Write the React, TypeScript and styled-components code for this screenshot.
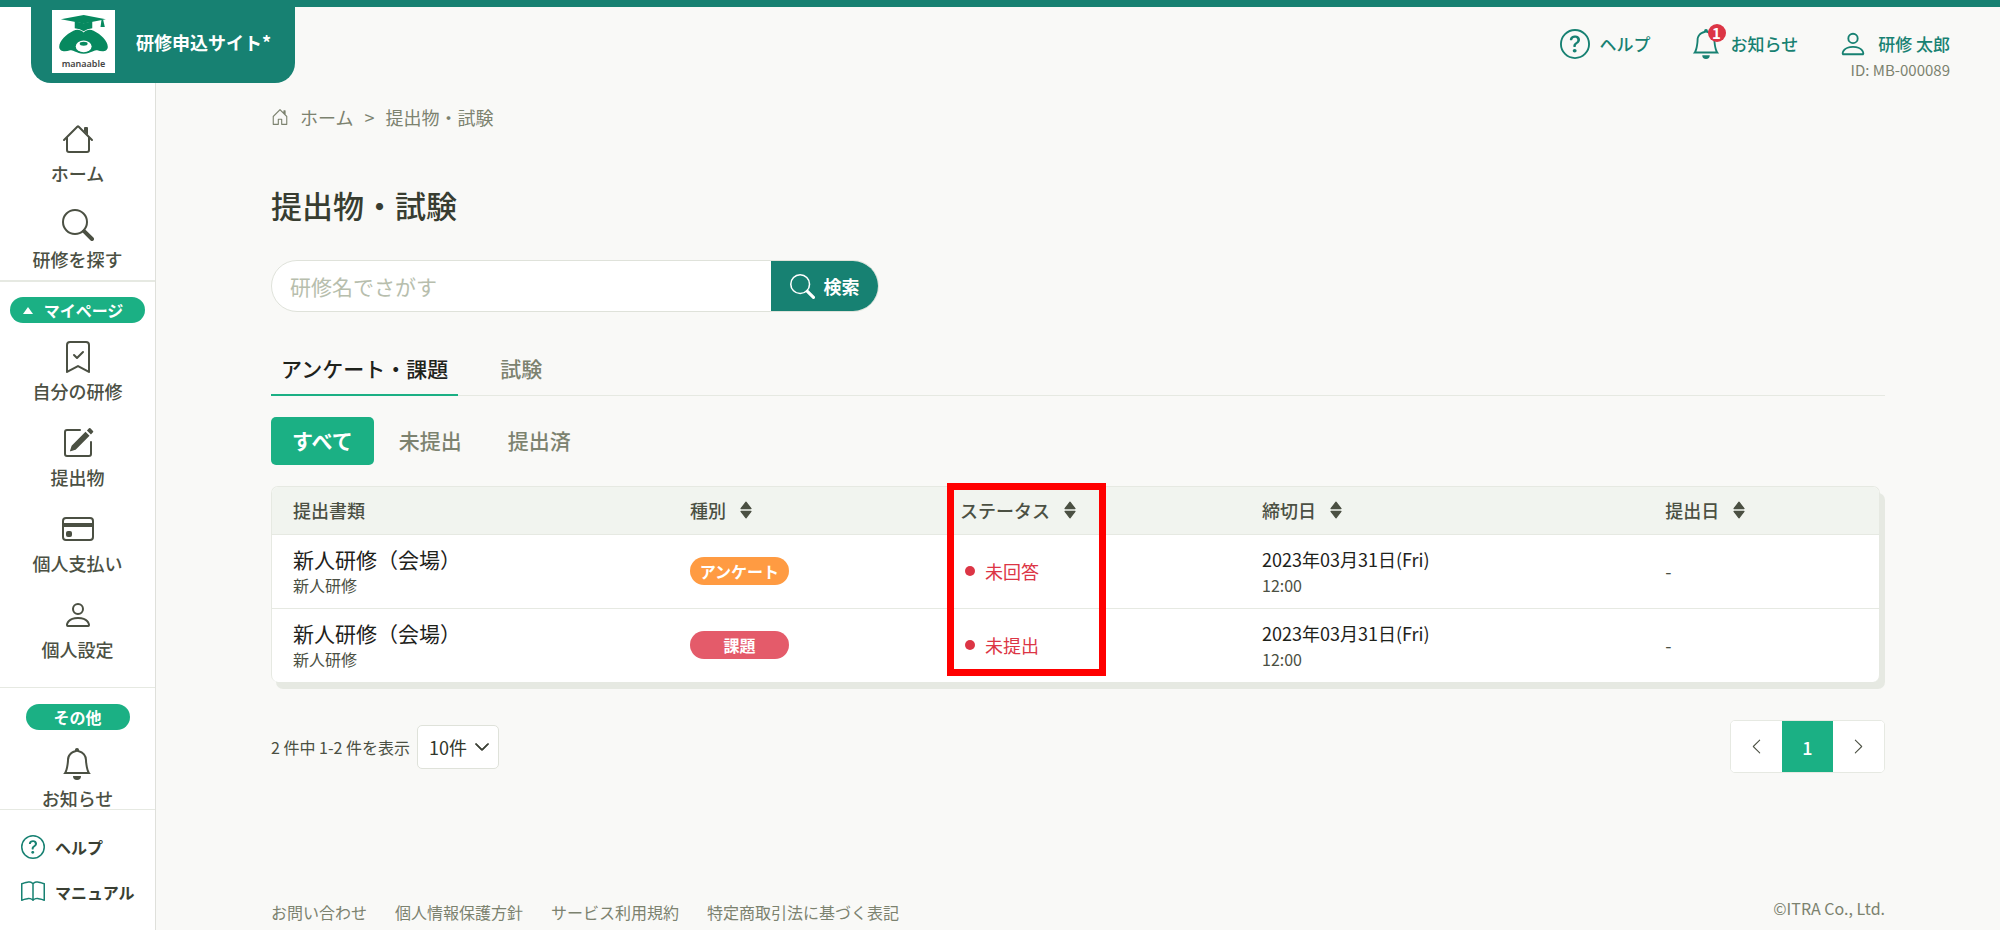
import React from "react";
import styled, { createGlobalStyle, css } from "styled-components";
import {
  BsBook,
  BsBookmarkCheck,
  BsChevronDown,
  BsChevronLeft,
  BsChevronRight,
  BsCreditCard,
  BsHouseDoor,
  BsPencilSquare,
  BsQuestionCircle,
} from "react-icons/bs";

const color = {
  deep: "#178172",
  accent: "#1bb084",
  text: "#4b5043",
  muted: "#7c826f",
  ink: "#1e221b",
  line: "#e6e9e2",
  page: "#f9f9f7",
  danger: "#dc3545",
};

const GlobalStyle = createGlobalStyle`
  *, *::before, *::after { box-sizing: border-box; }
  body {
    margin: 0;
    background: ${color.page};
    color: ${color.text};
    font-family: "Noto Sans CJK JP", "Noto Sans", sans-serif;
    font-size: 18px;
    line-height: 26px;
  }
  a { color: inherit; text-decoration: none; }
  button, input, select { font: inherit; color: inherit; }
  button { cursor: pointer; }
  h1, p, ul { margin: 0; padding: 0; }
  ul { list-style: none; }
  svg { display: block; flex: none; }
`;

/* ---------- icons ---------- */

type IconProps = { size: number };

const Glyph = ({ size, children }: IconProps & { children: React.ReactNode }) => (
  <svg width={size} height={size} viewBox="0 0 16 16" fill="currentColor" fillRule="evenodd" aria-hidden="true">
    {children}
  </svg>
);

const HouseIcon = ({ size }: IconProps) => (
  <Glyph size={size}>
    <path d="M2 13.5V7h1v6.5a.5.5 0 0 0 .5.5h9a.5.5 0 0 0 .5-.5V7h1v6.5a1.5 1.5 0 0 1-1.5 1.5h-9A1.5 1.5 0 0 1 2 13.5zm11-11V6l-2-2V2.5a.5.5 0 0 1 .5-.5h1a.5.5 0 0 1 .5.5z" />
    <path d="M7.293 1.5a1 1 0 0 1 1.414 0l6.647 6.646a.5.5 0 0 1-.708.708L8 2.207 1.354 8.854a.5.5 0 1 1-.708-.708L7.293 1.5z" />
  </Glyph>
);

const SearchIcon = ({ size }: IconProps) => (
  <Glyph size={size}>
    <path d="M10.442 10.442a1 1 0 0 1 1.415 0l3.85 3.85a1 1 0 0 1-1.414 1.415l-3.85-3.85a1 1 0 0 1 0-1.415z" />
    <path d="M6.5 12a5.5 5.5 0 1 0 0-11 5.5 5.5 0 0 0 0 11zM13 6.5a6.5 6.5 0 1 1-13 0 6.5 6.5 0 0 1 13 0z" />
  </Glyph>
);

const PersonIcon = ({ size }: IconProps) => (
  <Glyph size={size}>
    <path d="M10 5a2 2 0 1 1-4 0 2 2 0 0 1 4 0zM8 8a3 3 0 1 0 0-6 3 3 0 0 0 0 6zm6 5c0 1-1 1-1 1H3s-1 0-1-1 1-4 6-4 6 3 6 4zm-1-.004c-.001-.246-.154-.986-.832-1.664C11.516 10.68 10.289 10 8 10c-2.29 0-3.516.68-4.168 1.332-.678.678-.83 1.418-.832 1.664h10z" />
  </Glyph>
);

const BellIcon = ({ size }: IconProps) => (
  <Glyph size={size}>
    <path d="M8 16a2 2 0 0 0 2-2H6a2 2 0 0 0 2 2z" />
    <path d="M8 1.918l-.797.161A4.002 4.002 0 0 0 4 6c0 .628-.134 2.197-.459 3.742-.16.767-.376 1.566-.663 2.258h10.244c-.287-.692-.502-1.49-.663-2.258C12.134 8.197 12 6.628 12 6a4.002 4.002 0 0 0-3.203-3.92L8 1.917zM14.22 12c.223.447.481.801.78 1H1c.299-.199.557-.553.78-1C2.68 10.2 3 6.88 3 6c0-2.42 1.72-4.44 4.005-4.901a1 1 0 1 1 1.99 0A5.002 5.002 0 0 1 13 6c0 .88.32 4.2 1.22 6z" />
  </Glyph>
);

const SortIcon = () => (
  <svg width="12" height="18" viewBox="0 0 12 18" fill="currentColor" aria-hidden="true">
    <path d="M6 1.200 11 7.600H1zM6 16.800 1 10.400h10z" stroke="currentColor" strokeWidth="1.200" strokeLinejoin="round" />
  </svg>
);

const BearMark = () => (
  <svg width="50" height="39" viewBox="33 26 150 118" aria-hidden="true">
    <g fill="#07895f">
      <path d="M38 39 107 26l67 13-67 13z" />
      <path d="M80 45l27 6 26-6v21q-16 1-26 9-10-8-27-9z" />
      <path d="M161 40h5l5 22h-13z" />
      <path d="M107 79C98 69 85 69 76 74 55 84 33 105 33 122c0 15 17 16 33 11 10-3 14 8 41 10 27-2 31-13 41-10 16 5 32 4 32-11 0-17-22-38-43-48-9-5-21-5-30 5z" />
    </g>
    <ellipse cx="107" cy="121" rx="24" ry="18" fill="#fff" />
    <ellipse cx="107" cy="113" rx="12" ry="6" fill="#07895f" />
  </svg>
);

/* ---------- header ---------- */

const Header = styled.header`
  position: relative;
  z-index: 2;
  display: flex;
  justify-content: space-between;
  align-items: flex-start;
  height: 84px;
  padding: 0 50px 0 31px;
  border-top: 7px solid ${color.deep};
`;

const Brand = styled.a`
  display: flex;
  align-items: center;
  gap: 21px;
  height: 76px;
  padding: 3px 24px 10px 21px;
  border-radius: 0 0 20px 20px;
  background: ${color.deep};
  color: #fff;
  font-weight: 700;
`;

const LogoBox = styled.span`
  display: flex;
  flex-direction: column;
  align-items: center;
  gap: 3px;
  width: 63px;
  height: 63px;
  padding-top: 5px;
  background: #fff;
  color: #444;
  font: 600 9px/14px "Noto Sans", sans-serif;
`;

const HeaderNav = styled.nav`
  display: flex;
  gap: 40px;
  padding-top: 22px;
  color: ${color.deep};
  font-size: 17px;
  font-weight: 500;
`;

const HeaderLink = styled.a`
  display: flex;
  align-items: center;
  gap: 10px;
  height: 30px;
`;

const BellWrap = styled.span`
  position: relative;
`;

const Badge = styled.span`
  position: absolute;
  top: -5px;
  right: -5px;
  width: 18px;
  height: 18px;
  border-radius: 9px;
  background: ${color.danger};
  color: #fff;
  font-size: 15px;
  font-weight: 700;
  line-height: 18px;
  text-align: center;
`;

const UserId = styled.p`
  color: ${color.muted};
  font-size: 15px;
  font-weight: 400;
  line-height: 22px;
  text-align: right;
`;

/* ---------- side bar ---------- */

const Body = styled.div`
  display: flex;
  min-height: calc(100vh - 84px);
`;

const Sidebar = styled.aside`
  position: sticky;
  top: 0;
  display: flex;
  flex-direction: column;
  flex: none;
  width: 156px;
  height: 100vh;
  margin-top: -84px;
  padding-top: 84px;
  border-right: 1px solid #dfe0db;
  background: #fff;
`;

const SideScroll = styled.nav`
  flex: 1;
  min-height: 0;
  overflow-x: hidden;
  overflow-y: auto;
  scrollbar-width: none;
`;

const SideGroup = styled.section<{ $top: number; $bottom: number; $rule?: number }>`
  display: flex;
  flex-direction: column;
  align-items: center;
  padding: ${(p) => p.$top}px 0 ${(p) => p.$bottom}px;
  border-bottom: ${(p) => p.$rule ?? 0}px solid ${color.line};
`;

const SideList = styled.ul`
  display: flex;
  flex-direction: column;
  gap: 27px;
`;

const SideLink = styled.a`
  display: flex;
  flex-direction: column;
  align-items: center;
  gap: 9px;
  font-weight: 500;
  line-height: 18px;
`;

const sidePill = css`
  display: flex;
  align-items: center;
  justify-content: center;
  height: 26px;
  margin-bottom: 18px;
  padding: 0;
  border: 0;
  border-radius: 13px;
  background: ${color.accent};
  color: #fff;
  font-size: 16px;
  font-weight: 700;
  line-height: 26px;
`;

const SideToggle = styled.button`
  ${sidePill}
  gap: 11px;
  width: 135px;
  padding-right: 9px;
`;

const SideHeading = styled.span`
  ${sidePill}
  width: 104px;
`;

const SideFooter = styled.div`
  display: flex;
  flex-direction: column;
  gap: 19px;
  height: 121px;
  padding: 24px 20px 0 21px;
  border-top: 1px solid ${color.line};
`;

const SideFooterLink = styled.a`
  display: flex;
  align-items: center;
  gap: 10px;
  color: #3a3f33;
  font-size: 16px;
  font-weight: 700;

  svg {
    color: ${color.deep};
  }
`;

/* ---------- main ---------- */

const Main = styled.main`
  display: flex;
  flex-direction: column;
  flex: 1;
  min-width: 0;
  padding: 20px 115px 5px;
`;

const Crumbs = styled.nav`
  display: flex;
  align-items: center;
  gap: 11px;
  color: ${color.muted};
`;

const Title = styled.h1`
  margin-top: 51px;
  color: #383d31;
  font-size: 31px;
  font-weight: 500;
  line-height: 48px;
`;

const SearchForm = styled.form`
  display: flex;
  width: 608px;
  height: 52px;
  margin-top: 31px;
  overflow: hidden;
  border: 1px solid #dfe2da;
  border-radius: 26px;
  background: #fff;
`;

const SearchInput = styled.input`
  flex: 1;
  min-width: 0;
  padding: 0 18px;
  border: 0;
  outline: 0;
  background: transparent;
  font-size: 21px;

  &::placeholder {
    color: #b7bead;
    opacity: 1;
  }
`;

const SearchButton = styled.button`
  display: flex;
  align-items: center;
  justify-content: center;
  gap: 9px;
  width: 107px;
  border: 0;
  background: ${color.deep};
  color: #fff;
  font-weight: 700;
`;

const Tabs = styled.div`
  display: flex;
  gap: 32px;
  margin-top: 36px;
  border-bottom: 1px solid ${color.line};
`;

const Tab = styled.button<{ $active?: boolean }>`
  height: 48px;
  margin-bottom: -1px;
  padding: 0 10px 6px;
  border: 0;
  border-bottom: 2px solid ${(p) => (p.$active ? color.accent : "transparent")};
  background: none;
  color: ${(p) => (p.$active ? color.ink : color.muted)};
  font-size: 21px;
  font-weight: 500;
`;

const Filters = styled.div`
  display: flex;
  gap: 4px;
  margin-top: 21px;
`;

const Filter = styled.button<{ $active?: boolean }>`
  height: 48px;
  padding: 0 21px 2px;
  border: 0;
  border-radius: 5px;
  background: ${(p) => (p.$active ? color.accent : "transparent")};
  color: ${(p) => (p.$active ? "#fff" : color.muted)};
  font-size: 21px;
  font-weight: ${(p) => (p.$active ? 700 : 500)};
`;

const TableFrame = styled.div`
  position: relative;
  margin: 21px 5px 0 0;
`;

const TableCard = styled.div`
  overflow: hidden;
  border: 1px solid ${color.line};
  border-bottom: 0;
  border-radius: 7px;
  background: #fff;
  box-shadow: 5px 7px 0 #e6e9e2;
`;

const Highlight = styled.div`
  position: absolute;
  top: -3px;
  bottom: 6px;
  left: 42%;
  width: 159px;
  border: 7px solid #ff0000;
  pointer-events: none;
`;

const Table = styled.table`
  width: 100%;
  border-collapse: collapse;
  table-layout: fixed;
  text-align: left;

  th,
  td {
    padding: 0 21px;
  }
  th {
    height: 47px;
    background: #f1f4ef;
    font-weight: 500;
  }
  td {
    height: 74px;
    border-top: 1px solid ${color.line};
  }
`;

const Col = styled.col<{ $share?: number }>`
  width: ${(p) => (p.$share ? `${p.$share}%` : "auto")};
`;

const SortButton = styled.button`
  display: flex;
  align-items: center;
  gap: 14px;
  padding: 0;
  border: 0;
  background: none;
  font-weight: 500;
`;

const Primary = styled.a`
  display: block;
  color: ${color.ink};
  font-size: 21px;
  line-height: 28px;
`;

const DateText = styled.span`
  display: block;
  color: ${color.ink};
  line-height: 28px;
`;

const Secondary = styled.span`
  display: block;
  font-size: 16px;
  line-height: 24px;
`;

const Kind = styled.span<{ $tone: string }>`
  display: block;
  width: 99px;
  border-radius: 14px;
  background: ${(p) => p.$tone};
  color: #fff;
  font-size: 16px;
  font-weight: 700;
  line-height: 28px;
  text-align: center;
`;

const Status = styled.span`
  display: flex;
  align-items: center;
  gap: 10px;
  padding-left: 5px;
  color: ${color.danger};

  &::before {
    content: "";
    width: 10px;
    height: 10px;
    border-radius: 5px;
    background: currentColor;
  }
`;

const Pager = styled.div`
  display: flex;
  align-items: center;
  justify-content: space-between;
  margin-top: 38px;
`;

const PageSize = styled.label`
  display: flex;
  align-items: center;
  gap: 7px;
  font-size: 16px;
`;

const SelectBox = styled.span`
  display: grid;
  align-items: center;

  > * {
    grid-area: 1 / 1;
  }
  svg {
    justify-self: end;
    margin-right: 9px;
    color: #32372c;
    pointer-events: none;
  }
`;

const Select = styled.select`
  width: 82px;
  height: 44px;
  padding: 0 11px;
  border: 1px solid #dfe2da;
  border-radius: 5px;
  background: #fff;
  appearance: none;
  color: #32372c;
  font-size: 18px;
`;

const Pages = styled.nav`
  display: flex;
  overflow: hidden;
  border: 1px solid ${color.line};
  border-radius: 5px;
  background: #fff;
`;

const PageButton = styled.button<{ $current?: boolean }>`
  display: flex;
  align-items: center;
  justify-content: center;
  width: 51px;
  height: 51px;
  padding: 0;
  border: 0;
  background: ${(p) => (p.$current ? color.accent : "#fff")};
  color: ${(p) => (p.$current ? "#fff" : color.text)};
  font-weight: 500;
`;

const Footer = styled.footer`
  display: flex;
  justify-content: space-between;
  margin-top: auto;
  color: ${color.muted};
  font-size: 16px;
`;

const FooterLinks = styled.nav`
  display: flex;
  gap: 28px;
  padding-top: 4px;
`;

const sideMain = [
  { label: "ホーム", icon: <HouseIcon size={32} /> },
  { label: "研修を探す", icon: <SearchIcon size={32} /> },
];

const sideMine = [
  { label: "自分の研修", icon: <BsBookmarkCheck size={32} /> },
  { label: "提出物", icon: <BsPencilSquare size={32} /> },
  { label: "個人支払い", icon: <BsCreditCard size={32} /> },
  { label: "個人設定", icon: <PersonIcon size={32} /> },
];

const sideOther = [{ label: "お知らせ", icon: <BellIcon size={32} /> }];

const rows = [
  { kind: "アンケート", tone: "#ff9b42", status: "未回答" },
  { kind: "課題", tone: "#e45b6a", status: "未提出" },
];

const SideItems = ({ items }: { items: typeof sideMain }) => (
  <SideList>
    {items.map((item) => (
      <li key={item.label}>
        <SideLink href="#">
          {item.icon}
          {item.label}
        </SideLink>
      </li>
    ))}
  </SideList>
);

const SortHead = ({ children }: { children: string }) => (
  <th scope="col">
    <SortButton type="button">
      {children}
      <SortIcon />
    </SortButton>
  </th>
);

export default function App() {
  return (
    <>
      <GlobalStyle />
      <Header>
        <Brand href="#">
          <LogoBox>
            <BearMark />
            manaable
          </LogoBox>
          研修申込サイト*
        </Brand>
        <HeaderNav aria-label="ユーザー">
          <HeaderLink href="#">
            <BsQuestionCircle size={30} />
            ヘルプ
          </HeaderLink>
          <HeaderLink href="#">
            <BellWrap>
              <BellIcon size={30} />
              <Badge>1</Badge>
            </BellWrap>
            お知らせ
          </HeaderLink>
          <div>
            <HeaderLink href="#">
              <PersonIcon size={30} />
              研修 太郎
            </HeaderLink>
            <UserId>ID: MB-000089</UserId>
          </div>
        </HeaderNav>
      </Header>
      <Body>
        <Sidebar>
          <SideScroll aria-label="メニュー">
            <SideGroup $top={39} $bottom={12} $rule={2}>
              <SideItems items={sideMain} />
            </SideGroup>
            <SideGroup $top={15} $bottom={29} $rule={1}>
              <SideToggle type="button" aria-expanded="true">
                <svg width="10" height="7" viewBox="0 0 10 7" fill="currentColor" aria-hidden="true">
                  <path d="M5 0 10 7H0z" />
                </svg>
                マイページ
              </SideToggle>
              <SideItems items={sideMine} />
            </SideGroup>
            <SideGroup $top={16} $bottom={0}>
              <SideHeading>その他</SideHeading>
              <SideItems items={sideOther} />
            </SideGroup>
          </SideScroll>
          <SideFooter>
            <SideFooterLink href="#">
              <BsQuestionCircle size={24} />
              ヘルプ
            </SideFooterLink>
            <SideFooterLink href="#">
              <BsBook size={24} />
              マニュアル
            </SideFooterLink>
          </SideFooter>
        </Sidebar>
        <Main>
          <Crumbs aria-label="パンくず">
            <BsHouseDoor size={18} />
            <a href="#">ホーム</a>
            <span>&gt;</span>
            <span>提出物・試験</span>
          </Crumbs>
          <Title>提出物・試験</Title>
          <SearchForm role="search" onSubmit={(e) => e.preventDefault()}>
            <SearchInput type="text" placeholder="研修名でさがす" aria-label="研修名でさがす" />
            <SearchButton type="submit">
              <SearchIcon size={25} />
              検索
            </SearchButton>
          </SearchForm>
          <Tabs role="tablist">
            <Tab type="button" role="tab" aria-selected="true" $active>
              アンケート・課題
            </Tab>
            <Tab type="button" role="tab" aria-selected="false">
              試験
            </Tab>
          </Tabs>
          <Filters>
            <Filter type="button" $active>
              すべて
            </Filter>
            <Filter type="button">未提出</Filter>
            <Filter type="button">提出済</Filter>
          </Filters>
          <TableFrame>
            <TableCard>
              <Table>
                <colgroup>
                  <Col $share={24.7} />
                  <Col $share={16.8} />
                  <Col $share={18.8} />
                  <Col $share={25.1} />
                  <Col />
                </colgroup>
                <thead>
                  <tr>
                    <th scope="col">提出書類</th>
                    <SortHead>種別</SortHead>
                    <SortHead>ステータス</SortHead>
                    <SortHead>締切日</SortHead>
                    <SortHead>提出日</SortHead>
                  </tr>
                </thead>
                <tbody>
                  {rows.map((row) => (
                    <tr key={row.kind}>
                      <td>
                        <Primary href="#">新人研修（会場）</Primary>
                        <Secondary>新人研修</Secondary>
                      </td>
                      <td>
                        <Kind $tone={row.tone}>{row.kind}</Kind>
                      </td>
                      <td>
                        <Status>{row.status}</Status>
                      </td>
                      <td>
                        <DateText>2023年03月31日(Fri)</DateText>
                        <Secondary>12:00</Secondary>
                      </td>
                      <td>-</td>
                    </tr>
                  ))}
                </tbody>
              </Table>
            </TableCard>
            <Highlight />
          </TableFrame>
          <Pager>
            <PageSize>
              2 件中 1-2 件を表示
              <SelectBox>
                <Select defaultValue="10">
                  <option value="10">10件</option>
                  <option value="20">20件</option>
                </Select>
                <BsChevronDown size={16} strokeWidth={1} />
              </SelectBox>
            </PageSize>
            <Pages aria-label="ページ">
              <PageButton type="button" aria-label="前へ">
                <BsChevronLeft size={17} />
              </PageButton>
              <PageButton type="button" aria-current="page" $current>
                1
              </PageButton>
              <PageButton type="button" aria-label="次へ">
                <BsChevronRight size={17} />
              </PageButton>
            </Pages>
          </Pager>
          <Footer>
            <FooterLinks aria-label="フッター">
              <a href="#">お問い合わせ</a>
              <a href="#">個人情報保護方針</a>
              <a href="#">サービス利用規約</a>
              <a href="#">特定商取引法に基づく表記</a>
            </FooterLinks>
            <span>©ITRA Co., Ltd.</span>
          </Footer>
        </Main>
      </Body>
    </>
  );
}
